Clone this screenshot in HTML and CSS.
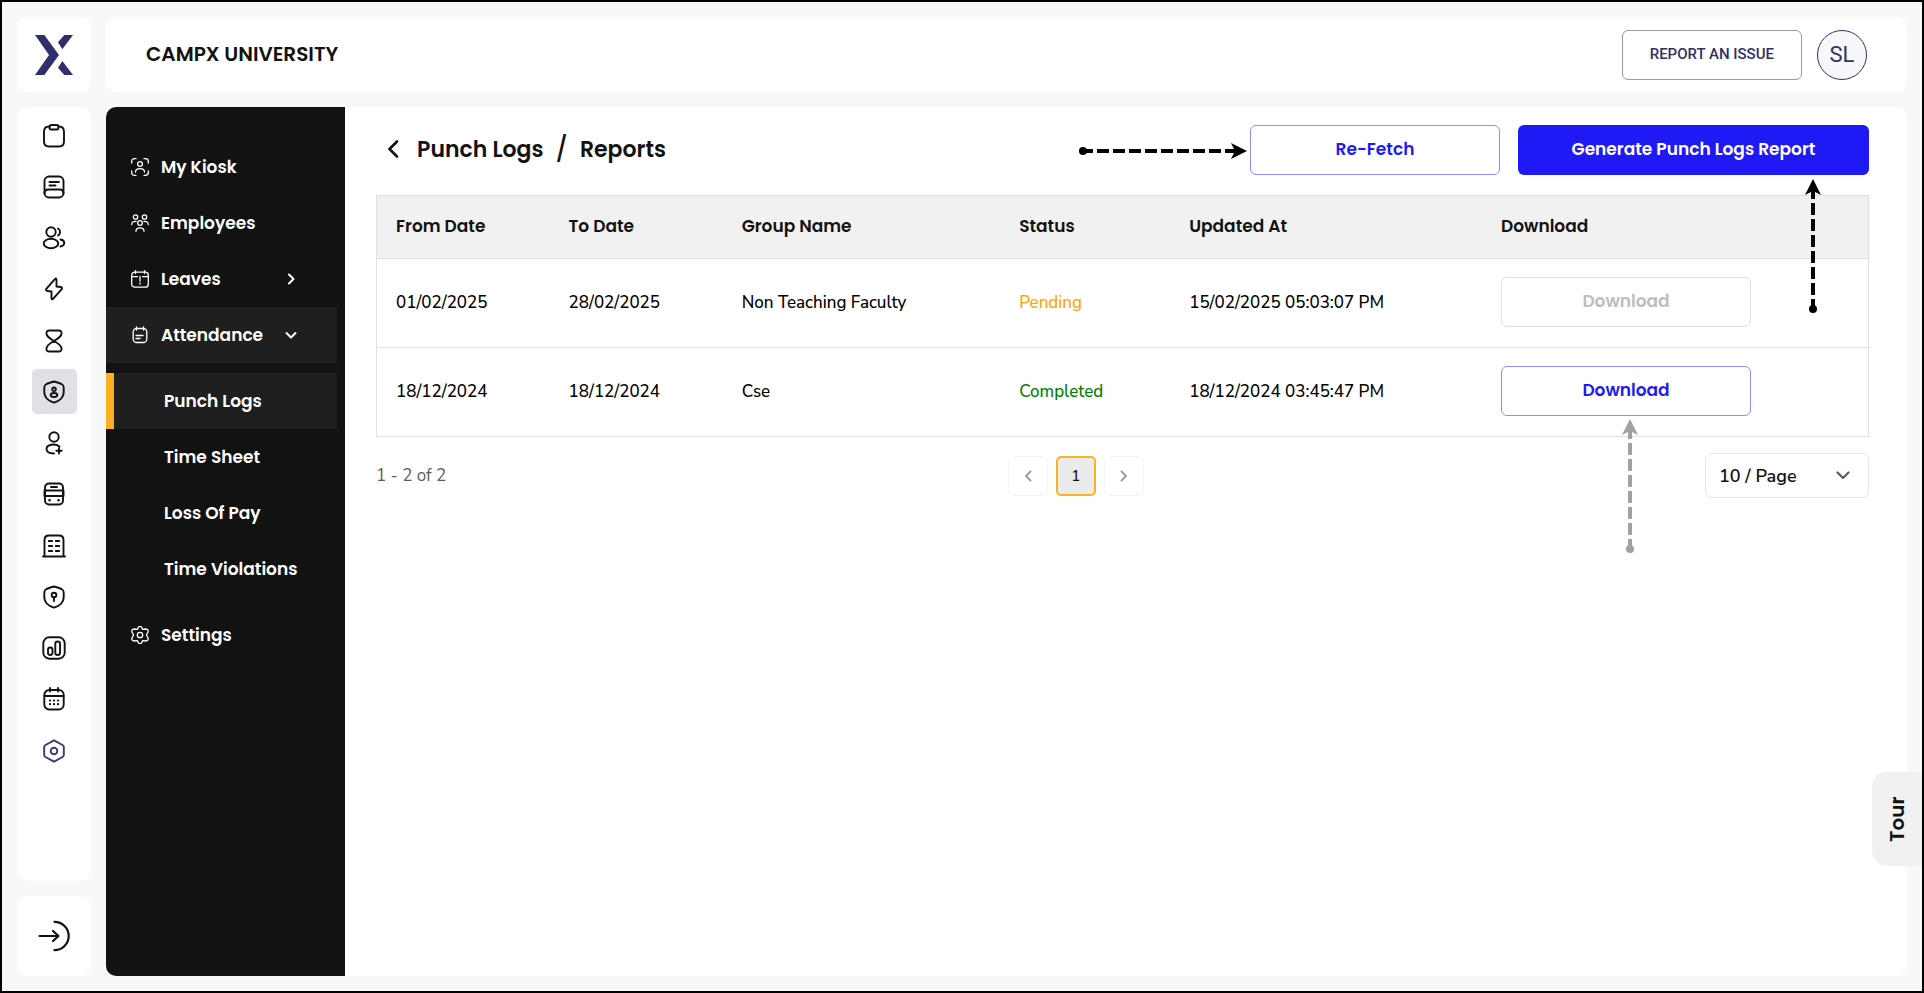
FILE: index.html
```html
<!DOCTYPE html>
<html lang="en">
<head>
    <meta charset="UTF-8">
    <meta name="viewport" content="width=device-width, initial-scale=1.0">
    <title>Punch Logs Reports</title>
    <link rel="stylesheet" href="styles.css">
</head>
<body>

    <div class="app">
        <!-- Left icon rail -->
        <div class="rail">
            <a class="card logo" href="#" aria-label="Home">
                <svg width="38" height="40" viewBox="0 0 114 120" fill="#312f6b">
                    <path d="M0 0H28L72 60L28 120H0L42 60Z"/>
                    <path d="M88 0H114L82 43L69 22Z"/>
                    <path d="M82 78L114 120H88L69 98Z"/>
                </svg>
            </a>

            <nav class="card rail-nav" aria-label="Modules">
                <ul class="rail-list">
                    <li><a class="rail-link" href="#" aria-label="Tasks">
                        <svg class="icon" viewBox="0 0 24 24"><path d="M8 2.5H7Q2 2.500 2 8V17.500Q2 22.500 7 22.500H17Q22 22.500 22 17.500V8Q22 2.500 17 2.500H16"/><rect x="7.500" y="1" width="9" height="4.500" rx="1.800"/></svg>
                    </a></li>
                    <li><a class="rail-link" href="#" aria-label="Courses">
                        <svg class="icon" viewBox="0 0 24 24"><rect x="2.500" y="1.500" width="19" height="21" rx="4.500"/><path d="M2.500 18.500Q2.500 14.500 6.500 14.500H17.500Q21.500 14.500 21.500 18.500M7.500 7H17M7.500 10.500H13.500"/></svg>
                    </a></li>
                    <li><a class="rail-link" href="#" aria-label="Students">
                        <svg class="icon" viewBox="0 0 24 24"><circle cx="9" cy="6" r="4.700"/><ellipse cx="9" cy="17.500" rx="7.300" ry="4.700"/><path d="M16 2.500A4 4 0 0 1 16 9.500M18.500 13.500C23.500 14.500 23.500 19.500 18.500 20.500"/></svg>
                    </a></li>
                    <li><a class="rail-link" href="#" aria-label="Activity">
                        <svg class="icon" viewBox="0 0 24 24"><path d="M12.700 2.300Q14.500 .5 14.500 3V9.500L18.500 10Q21 10.400 19.500 12.300L11.300 21.700Q9.500 23.500 9.500 21V14.500L5.500 14Q3 13.600 4.500 11.700Z"/></svg>
                    </a></li>
                    <li><a class="rail-link" href="#" aria-label="Pending">
                        <svg class="icon" viewBox="0 0 24 24"><path d="M7.500 1.500H16.500Q20 1.500 19.500 5Q19 8 12 12Q5 16 4.500 19Q4 22.500 7.500 22.500H16.500Q20 22.500 19.500 19Q19 16 12 12Q5 8 4.500 5Q4 1.500 7.500 1.500Z"/></svg>
                    </a></li>
                    <li><a class="rail-link active" href="#" aria-label="Human resources">
                        <svg class="icon" viewBox="0 0 24 24"><path d="M12 1.500C14 2 17 3 19.500 4Q21.700 5 21.700 7.500V12C21.700 18 16.500 21.500 12 22.700C7.500 21.500 2.300 18 2.300 12V7.500Q2.300 5 4.500 4C7 3 10 2 12 1.500Z"/><circle cx="12" cy="9.300" r="1.800"/><ellipse cx="12" cy="15" rx="3.300" ry="2"/></svg>
                    </a></li>
                    <li><a class="rail-link" href="#" aria-label="Admissions">
                        <svg class="icon" viewBox="0 0 24 24"><circle cx="12" cy="6" r="4.700"/><path d="M17.500 15.500C13 12 4.500 13.500 4.500 18C4.500 21.500 8.500 22.500 12 22.500M17 17V22.500M14.300 19.700H19.700"/></svg>
                    </a></li>
                    <li><a class="rail-link" href="#" aria-label="Transport">
                        <svg class="icon" viewBox="0 0 24 24"><rect x="3" y="1.500" width="18" height="21" rx="4"/><path d="M3 8.500H21M3 14H21M9 5H15M2.500 8.500V14M21.500 8.500V14"/><path d="M7.500 18.200h.1M16.500 18.200h.1" stroke-width="2.600"/></svg>
                    </a></li>
                    <li><a class="rail-link" href="#" aria-label="Hostel">
                        <svg class="icon" viewBox="0 0 24 24"><path d="M2.500 22V6Q2.500 1.500 7 1.500H17Q21.500 1.500 21.500 6V22M1 22.500H23M6.800 7H10.200M13.800 7H17.200M6.800 12H10.200M13.800 12H17.200M6.800 17H10.200M13.800 17H17.200"/></svg>
                    </a></li>
                    <li><a class="rail-link" href="#" aria-label="Access">
                        <svg class="icon" viewBox="0 0 24 24"><path d="M12 1.500C14 2 17 3 19.500 4Q21.700 5 21.700 7.500V12C21.700 18 16.500 21.500 12 22.700C7.500 21.500 2.300 18 2.300 12V7.500Q2.300 5 4.500 4C7 3 10 2 12 1.500Z"/><circle cx="12" cy="10" r="2.300"/><path d="M12 12.500V16"/></svg>
                    </a></li>
                    <li><a class="rail-link" href="#" aria-label="Reports">
                        <svg class="icon" viewBox="0 0 24 24"><rect x="1.300" y="1.300" width="21.400" height="21.400" rx="6"/><rect x="6" y="11.500" width="4.500" height="7.500" rx="2.200"/><rect x="13.300" y="5.500" width="4.700" height="13.500" rx="2.300"/></svg>
                    </a></li>
                    <li><a class="rail-link" href="#" aria-label="Calendar">
                        <svg class="icon" viewBox="0 0 24 24"><rect x="2.300" y="3" width="19.400" height="19.500" rx="5"/><path d="M2.300 9H21.700M8 1V4.500M16 1V4.500"/><path d="M8 13.500h.1M12 13.500h.1M16 13.500h.1M8 17.200h.1M12 17.200h.1M16 17.200h.1" stroke-width="2.200"/></svg>
                    </a></li>
                    <li><a class="rail-link settings" href="#" aria-label="Configuration">
                        <svg class="icon" viewBox="0 0 24 24"><path d="M12 1.300L20.500 6Q21.800 6.700 21.800 8V16Q21.800 17.300 20.500 18L12 22.700L3.500 18Q2.200 17.300 2.200 16V8Q2.200 6.700 3.500 6Z"/><circle cx="12" cy="12" r="3.300"/></svg>
                    </a></li>
                </ul>
            </nav>

            <button class="card logout" type="button" aria-label="Log out">
                <svg class="icon-logout" viewBox="0 0 32 32"><path d="M1.500 16H20M15 11L20.500 16L15 21M16.500 1.800A14 14 0 0 1 16.500 30.200"/></svg>
            </button>
        </div>

        <div class="page">
            <header class="card topbar">
                <div class="org-name">CAMPX UNIVERSITY</div>
                <div class="topbar-actions">
                    <button class="btn-issue" type="button">REPORT AN ISSUE</button>
                    <button class="avatar" type="button">SL</button>
                </div>
            </header>

            <div class="card workspace">
                <nav class="sidebar" aria-label="Human resources menu">
                    <a class="menu-item" href="#">
                        <svg class="menu-icon" viewBox="0 0 18 18"><path d="M.7 5V3.500Q.7 .7 3.500 .7H5M13 .7H14.500Q17.300 .7 17.300 3.500V5M17.300 13V14.500Q17.300 17.300 14.500 17.300H13M5 17.300H3.500Q.7 17.300 .7 14.500V13M4.500 14C4.500 9.500 13.500 9.500 13.500 14"/><circle cx="9" cy="6" r="2.400"/></svg>
                        <span>My Kiosk</span>
                    </a>
                    <a class="menu-item" href="#">
                        <svg class="menu-icon" viewBox="0 0 18 18"><circle cx="4.500" cy="3" r="2.200"/><circle cx="13.500" cy="3" r="2.200"/><circle cx="9" cy="9" r="2.300"/><path d="M.7 10.500C.7 8 2.500 7.300 5 7.500M17.300 10.500C17.300 8 15.500 7.300 13 7.500M5 17.300C5 12.700 13 12.700 13 17.300"/></svg>
                        <span>Employees</span>
                    </a>
                    <a class="menu-item" href="#">
                        <svg class="menu-icon" viewBox="0 0 18 18"><rect x=".7" y="2.200" width="16.600" height="15" rx="3"/><path d="M4.500 .5V3.500M13.500 .5V3.500M.7 6.700H6.500M11.500 6.700H17.300M9 6.500V11M9 13V14"/></svg>
                        <span>Leaves</span>
                        <svg class="menu-arrow" viewBox="0 0 12 12"><path d="M4 1.500L8.500 6L4 10.500"/></svg>
                    </a>
                    <a class="menu-item open" href="#">
                        <svg class="menu-icon" viewBox="0 0 18 18"><rect x="2.200" y="2.500" width="13.600" height="14" rx="3.500"/><path d="M5.500 1V4M12.500 1V4M5 9.500H12M5 12.500H9"/></svg>
                        <span>Attendance</span>
                        <svg class="menu-arrow" viewBox="0 0 12 12"><path d="M1.500 4L6 8.500L10.500 4"/></svg>
                    </a>
                    <div class="submenu">
                        <a class="submenu-item current" href="#">Punch Logs</a>
                        <a class="submenu-item" href="#">Time Sheet</a>
                        <a class="submenu-item" href="#">Loss Of Pay</a>
                        <a class="submenu-item" href="#">Time Violations</a>
                    </div>
                    <a class="menu-item" href="#">
                        <svg class="menu-icon" viewBox="0 0 18 18"><path d="M7.500 1Q9 -.5 10.500 1L11.500 3.300L15 3Q17.800 3.600 17 6L15.500 9L17 12Q17.800 14.400 15 15L11.500 14.700L10.500 17Q9 18.500 7.500 17L6.500 14.700L3 15Q.2 14.400 1 12L2.500 9L1 6Q.2 3.600 3 3L6.500 3.300Z"/><circle cx="9" cy="9" r="2.700"/></svg>
                        <span>Settings</span>
                    </a>
                </nav>

                <main class="content">
                    <div class="content-header">
                        <div class="breadcrumb">
                            <a class="back" href="#" aria-label="Back">
                                <svg width="12" height="18" viewBox="0 0 12 18"><path d="M10 1.500L2.500 9L10 16.500"/></svg>
                            </a>
                            <span>Punch Logs</span>
                            <span class="slash">/</span>
                            <span>Reports</span>
                        </div>
                        <div class="header-actions">
                            <div class="callout">
                                <button class="btn btn-outline" type="button">Re-Fetch</button>
                                <svg class="arrow arrow-left" width="168" height="16" viewBox="0 0 168 16">
                                    <circle cx="4" cy="8" r="4"/>
                                    <path class="dash" d="M2 8H158"/>
                                    <path d="M168 8L152 0L156 8L152 16Z"/>
                                </svg>
                            </div>
                            <div class="callout">
                                <button class="btn btn-primary" type="button">Generate Punch Logs Report</button>
                                <svg class="arrow arrow-below-right" width="16" height="134" viewBox="0 0 16 134">
                                    <circle cx="8" cy="130" r="4"/>
                                    <path class="dash" d="M8 132V12"/>
                                    <path d="M8 0L16 16L8 12L0 16Z"/>
                                </svg>
                            </div>
                        </div>
                    </div>

                    <table class="logs">
                        <colgroup>
                            <col class="col-from">
                            <col class="col-to">
                            <col class="col-group">
                            <col class="col-status">
                            <col class="col-updated">
                            <col>
                        </colgroup>
                        <thead>
                            <tr>
                                <th>From Date</th>
                                <th>To Date</th>
                                <th>Group Name</th>
                                <th>Status</th>
                                <th>Updated At</th>
                                <th>Download</th>
                            </tr>
                        </thead>
                        <tbody>
                            <tr>
                                <td>01/02/2025</td>
                                <td>28/02/2025</td>
                                <td>Non Teaching Faculty</td>
                                <td class="pending">Pending</td>
                                <td>15/02/2025 05:03:07 PM</td>
                                <td><button class="btn btn-outline" type="button" disabled>Download</button></td>
                            </tr>
                            <tr>
                                <td>18/12/2024</td>
                                <td>18/12/2024</td>
                                <td>Cse</td>
                                <td class="completed">Completed</td>
                                <td>18/12/2024 03:45:47 PM</td>
                                <td>
                                    <div class="callout">
                                        <button class="btn btn-outline" type="button">Download</button>
                                        <svg class="arrow arrow-below" width="16" height="134" viewBox="0 0 16 134">
                                            <circle cx="8" cy="130" r="4"/>
                                            <path class="dash" d="M8 132V12"/>
                                            <path d="M8 0L16 16L8 12L0 16Z"/>
                                        </svg>
                                    </div>
                                </td>
                            </tr>
                        </tbody>
                    </table>

                    <div class="table-footer">
                        <span class="range">1 - 2 of 2</span>
                        <div class="pages">
                            <button class="page-btn" type="button" aria-label="Previous page" disabled>
                                <svg width="8" height="12" viewBox="0 0 8 12"><path d="M6.500 1.500L2 6L6.500 10.500"/></svg>
                            </button>
                            <button class="page-btn selected" type="button">1</button>
                            <button class="page-btn" type="button" aria-label="Next page" disabled>
                                <svg width="8" height="12" viewBox="0 0 8 12"><path d="M1.500 1.500L6 6L1.500 10.500"/></svg>
                            </button>
                        </div>
                        <div class="page-size">
                            <select aria-label="Rows per page">
                                <option>10 / Page</option>
                                <option>25 / Page</option>
                                <option>50 / Page</option>
                            </select>
                            <svg class="select-arrow" width="14" height="9" viewBox="0 0 14 9"><path d="M1.500 1.500L7 7L12.500 1.500"/></svg>
                        </div>
                    </div>
                </main>
            </div>
        </div>

        <button class="tour" type="button">Tour</button>
    </div>

</body>
</html>
```
FILE: styles.css
```css
* {
    box-sizing: border-box;
}

body {
    margin: 0;
    font-family: Avenir, "Nunito Sans", Lato, sans-serif;
    font-size: 17px;
    color: #121212;
}

button, select {
    font-family: inherit;
    cursor: pointer;
}

a {
    color: inherit;
    text-decoration: none;
}

svg {
    display: block;
    flex-shrink: 0;
}

.app {
    position: relative;
    display: flex;
    gap: 15px;
    min-height: 100vh;
    padding: 15px;
    background-color: #f7f8fa;
    border: 2px solid #000;
}

.card {
    background-color: white;
    border: none;
    border-radius: 10px;
}

/* Icon rail */
.rail {
    display: flex;
    flex-direction: column;
    gap: 15px;
    width: 74px;
}

.logo {
    display: flex;
    align-items: center;
    justify-content: center;
    height: 75px;
}

.rail-nav {
    flex: 1;
    padding-top: 6px;
}

.rail-list {
    display: flex;
    flex-direction: column;
    align-items: center;
    justify-content: space-between;
    height: 660px;
    margin: 0;
    padding: 0;
    list-style: none;
}

.rail-link {
    display: flex;
    align-items: center;
    justify-content: center;
    width: 45px;
    height: 45px;
    border-radius: 5px;
}

.rail-link.active {
    background-color: #e0e0e6;
}

.rail-link.settings {
    color: #3b3874;
}

.icon, .icon-logout, .menu-icon, .menu-arrow, .back svg, .page-btn svg, .select-arrow {
    fill: none;
    stroke: currentColor;
    stroke-width: 1.9;
    stroke-linecap: round;
    stroke-linejoin: round;
}

.icon {
    width: 24px;
    height: 24px;
}

.logout {
    display: flex;
    align-items: center;
    justify-content: center;
    height: 80px;
    color: #121212;
}

.icon-logout {
    width: 32px;
    height: 32px;
    stroke-width: 2.2;
}

/* Top bar */
.page {
    display: flex;
    flex-direction: column;
    flex: 1;
    gap: 15px;
    min-width: 0;
}

.topbar {
    display: flex;
    align-items: center;
    justify-content: space-between;
    height: 75px;
    padding: 0 40px;
}

.org-name {
    padding-bottom: 2px;
    font-family: Poppins, Inter, sans-serif;
    font-size: 20px;
    font-weight: 600;
}

.topbar-actions {
    display: flex;
    gap: 15px;
}

.btn-issue {
    height: 50px;
    padding: 0 27px 2px;
    background-color: white;
    border: 1px solid #9897b5;
    border-radius: 6px;
    font-family: Roboto, sans-serif;
    font-size: 15px;
    font-weight: 500;
    color: #312f6b;
}

.avatar {
    width: 50px;
    height: 50px;
    padding: 0;
    background-color: #f7f8fa;
    border: 1px solid #312f6b;
    border-radius: 50%;
    font-family: Roboto, sans-serif;
    font-size: 22px;
    color: #312f6b;
}

/* Sidebar */
.workspace {
    display: flex;
    flex: 1;
}

.sidebar {
    width: 239px;
    padding: 32px 8px 0 0;
    background-color: #121212;
    border-radius: 10px 0 0 10px;
    font-family: Poppins, Inter, sans-serif;
    font-weight: 600;
    color: white;
}

.menu-item {
    display: flex;
    align-items: center;
    gap: 12px;
    height: 56px;
    padding: 0 40px 0 25px;
}

.menu-icon {
    width: 18px;
    height: 18px;
    stroke-width: 1.3;
}

.menu-arrow {
    width: 12px;
    height: 12px;
    margin-left: auto;
    stroke-width: 2;
}

.open, .current {
    background-color: #1f1f1f;
}

.submenu {
    padding: 10px 0;
}

.submenu-item {
    display: flex;
    align-items: center;
    height: 56px;
    padding-left: 58px;
}

.submenu-item.current {
    padding-left: 50px;
    border-left: 8px solid #ffb020;
}

/* Content */
.content {
    flex: 1;
    min-width: 0;
    padding: 18px 38px 0 31px;
}

.content-header {
    display: flex;
    align-items: center;
    justify-content: space-between;
    margin-bottom: 20px;
}

.breadcrumb {
    display: flex;
    align-items: center;
    gap: 12px;
    padding: 0 0 2px 11px;
    font-family: Poppins, Inter, sans-serif;
    font-size: 22px;
    font-weight: 600;
}

.back {
    margin-right: 6px;
}

.back svg {
    stroke-width: 2.6;
}

.slash {
    font-size: 24px;
    font-weight: 500;
}

.header-actions {
    display: flex;
    gap: 18px;
}

.btn {
    display: block;
    width: 250px;
    height: 50px;
    padding: 0 0 2px;
    border-radius: 6px;
    font-family: Poppins, Inter, sans-serif;
    font-size: 17px;
    font-weight: 600;
}

.btn-outline {
    background-color: white;
    border: 1px solid #8e8cfa;
    color: #1f1af5;
}

.btn-outline:disabled {
    border-color: #e0e0e0;
    color: #bdbdbd;
    cursor: default;
}

.btn-primary {
    width: 351px;
    background-color: #1f1af5;
    border: none;
    color: white;
}

/* Dashed arrows pointing at the buttons */
.callout {
    position: relative;
    width: fit-content;
}

.arrow {
    position: absolute;
}

.dash {
    fill: none;
    stroke: #000;
    stroke-width: 4;
    stroke-dasharray: 12 4;
}

.arrow-left {
    top: 18px;
    right: 100%;
    margin-right: 3px;
}

.arrow-below-right {
    top: 54px;
    right: 48px;
}

.arrow-below {
    top: 53px;
    left: 121px;
    fill: #a1a1a1;
}

.arrow-below .dash {
    stroke: #a1a1a1;
}

/* Table */
.logs {
    width: 100%;
    table-layout: fixed;
    border-collapse: collapse;
    border: 1px solid #e0e0e0;
}

.col-from, .col-to {
    width: 11.6%;
}

.col-group {
    width: 18.6%;
}

.col-status {
    width: 11.4%;
}

.col-updated {
    width: 20.9%;
}

th, td {
    padding: 0 19px 2px;
    border-bottom: 1px solid #e0e0e0;
    text-align: left;
}

th {
    height: 63px;
    background-color: #f1f1f1;
    font-family: Poppins, Inter, sans-serif;
    font-weight: 600;
}

td {
    height: 89px;
    font-weight: 500;
    color: #000;
    white-space: nowrap;
}

td.pending {
    color: orange;
}

td.completed {
    color: green;
}

.table-footer {
    display: flex;
    align-items: center;
    justify-content: space-between;
    margin-top: 16px;
}

.range {
    color: #5c5c5c;
}

.pages {
    display: flex;
    gap: 8px;
}

.page-btn {
    display: flex;
    align-items: center;
    justify-content: center;
    width: 40px;
    height: 40px;
    padding: 0;
    background-color: white;
    border: 1px solid #f3f3f3;
    border-radius: 5px;
    font-size: 15px;
    font-weight: 500;
    color: #9e9e9e;
}

.page-btn svg {
    stroke-width: 2;
}

.page-btn.selected {
    background-color: #ebebeb;
    border: 2px solid #ffb020;
    color: #121212;
}

.page-size {
    position: relative;
}

.page-size select {
    width: 164px;
    height: 45px;
    padding: 0 13px;
    appearance: none;
    background-color: white;
    border: 1px solid #e6e6e6;
    border-radius: 6px;
    font-size: 18px;
    font-weight: 600;
    color: #121212;
}

.select-arrow {
    position: absolute;
    top: 18px;
    right: 19px;
    stroke-width: 2.2;
    color: #5c5c5c;
    pointer-events: none;
}

.tour {
    position: absolute;
    right: 0;
    bottom: 125px;
    width: 50px;
    height: 94px;
    padding: 0;
    background-color: #f1f1f1;
    border: none;
    border-radius: 0 15px 15px 0;
    font-family: Poppins, Inter, sans-serif;
    font-size: 20px;
    font-weight: 600;
    color: #121212;
    writing-mode: vertical-rl;
    transform: rotate(180deg);
}
```
